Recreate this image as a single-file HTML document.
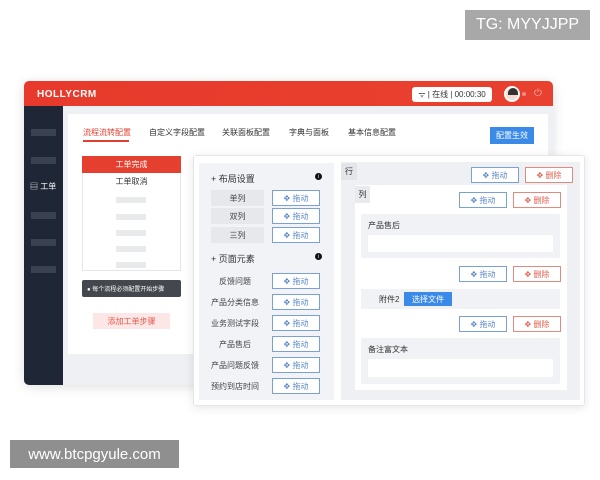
<!DOCTYPE html>
<html><head><meta charset="utf-8"><style>
*{margin:0;padding:0;box-sizing:border-box}
body{width:600px;height:480px;background:#fff;position:relative;overflow:hidden;font-family:"Liberation Sans","Noto Sans CJK SC",sans-serif;color:#333;font-size:8px}
.a{position:absolute}
.c{display:flex;align-items:center;justify-content:center}
.db{position:absolute;border:1px solid #7aa0d6;color:#5b88c8;background:#fff;font-size:8px;display:flex;align-items:center;justify-content:center;width:48px;height:16px}
.dl{position:absolute;border:1px solid #e08a80;color:#e06050;background:#fff;font-size:8px;display:flex;align-items:center;justify-content:center;width:48px;height:16px}
.lab{position:absolute;background:#e6e8ec;width:53px;height:16px;display:flex;align-items:center;justify-content:center;font-size:8px;color:#444}
.el{position:absolute;left:200px;width:70px;text-align:center;font-size:8px;color:#444}
.sk{position:absolute;left:116px;width:30px;height:6px;background:#e9eaec}
.sb{position:absolute;left:31px;width:25px;height:7px;background:#3a4252}
</style></head><body>
<div class="a c" style="left:465px;top:10px;width:125px;height:30px;background:#a8a8a8;color:#fff;font-size:16px">TG: MYYJJPP</div>

<div class="a" style="left:24px;top:81px;width:529px;height:304px;border-radius:5px;overflow:hidden;background:#eef0f3;box-shadow:0 2px 12px rgba(0,0,0,.12)">
 <div class="a" style="left:0;top:0;width:529px;height:25px;background:linear-gradient(90deg,#e73a2c,#e8412f)"></div>
 <div class="a" style="left:13px;top:8px;color:#fff;font-weight:bold;font-size:10px;letter-spacing:.5px">HOLLYCRM</div>
 <div class="a c" style="left:388px;top:6px;width:80px;height:15px;background:#fff;border-radius:3px;font-size:8px;color:#333">ᯤ | 在线 | 00:00:30</div>
 <div class="a" style="left:480px;top:5px;width:16px;height:16px;border-radius:50%;background:#f3ddd2;border:2px solid #fff"><div style="position:absolute;left:2px;top:0;width:10px;height:7px;border-radius:5px 5px 0 0;background:#333"></div></div>
 <div class="a" style="left:498px;top:11px;width:4px;height:4px;border-radius:50%;background:#f08a80"></div>
 <div class="a" style="left:510px;top:7px;color:#f9b0a8;font-size:10px">⏻</div>
 <div class="a" style="left:0;top:25px;width:39px;height:279px;background:#1f2636"></div>
 <div class="sb" style="left:7px;top:48px"></div>
 <div class="sb" style="left:7px;top:76px"></div>
 <div class="a" style="left:6px;top:100px;color:#fff;font-size:8px">▤ 工单</div>
 <div class="sb" style="left:7px;top:131px"></div>
 <div class="sb" style="left:7px;top:158px"></div>
 <div class="sb" style="left:7px;top:185px"></div>
 <div class="a" style="left:44px;top:33px;width:480px;height:240px;background:#fff"></div>
</div>

<div class="a" style="left:83px;top:127px;color:#e0402f;font-size:8px">流程流转配置</div>
<div class="a" style="left:83px;top:140px;width:46px;height:2px;background:#e0402f"></div>
<div class="a" style="left:149px;top:127px;font-size:8px">自定义字段配置</div>
<div class="a" style="left:222px;top:127px;font-size:8px">关联面板配置</div>
<div class="a" style="left:289px;top:127px;font-size:8px">字典与面板</div>
<div class="a" style="left:348px;top:127px;font-size:8px">基本信息配置</div>
<div class="a c" style="left:490px;top:127px;width:44px;height:17px;background:#3b8ae8;color:#fff;font-size:8px">配置生效</div>

<div class="a" style="left:82px;top:156px;width:99px;height:115px;border:1px solid #e6e6e6;background:#fff"></div>
<div class="a c" style="left:82px;top:156px;width:99px;height:17px;background:#e5402f;color:#fff;font-size:8px">工单完成</div>
<div class="a c" style="left:82px;top:173px;width:99px;height:17px;font-size:8px">工单取消</div>
<div class="sk" style="top:197px"></div><div class="sk" style="top:214px"></div><div class="sk" style="top:230px"></div><div class="sk" style="top:246px"></div><div class="sk" style="top:262px"></div>
<div class="a" style="left:82px;top:280px;width:99px;height:17px;background:#44474d;border-radius:2px;color:#fff;font-size:6px;padding:4px 0 0 5px">● 每个流程必须配置开始步骤</div>
<div class="a c" style="left:93px;top:313px;width:77px;height:16px;background:#fde7e6;color:#e25a4c;font-size:8px">添加工单步骤</div>

<div class="a" style="left:193px;top:155px;width:392px;height:251px;background:#fff;border:1px solid #e4e6ea;border-radius:3px;box-shadow:0 2px 10px rgba(0,0,0,.1)"></div>
<div class="a" style="left:199px;top:163px;width:135px;height:237px;background:#f1f3f7"></div>
<div class="a" style="left:211px;top:172px;font-size:9px">+ 布局设置</div>
<div class="a c" style="left:315px;top:173px;width:7px;height:7px;border-radius:50%;background:#111;color:#fff;font-size:5px">i</div>
<div class="lab" style="left:211px;top:190px">单列</div><div class="db" style="left:272px;top:190px">✥ 拖动</div>
<div class="lab" style="left:211px;top:208px">双列</div><div class="db" style="left:272px;top:208px">✥ 拖动</div>
<div class="lab" style="left:211px;top:227px">三列</div><div class="db" style="left:272px;top:227px">✥ 拖动</div>
<div class="a" style="left:211px;top:252px;font-size:9px">+ 页面元素</div>
<div class="a c" style="left:315px;top:253px;width:7px;height:7px;border-radius:50%;background:#111;color:#fff;font-size:5px">i</div>
<div class="el" style="top:276px">反馈问题</div><div class="db" style="left:272px;top:273px">✥ 拖动</div>
<div class="el" style="top:297px">产品分类信息</div><div class="db" style="left:272px;top:294px">✥ 拖动</div>
<div class="el" style="top:318px">业务测试字段</div><div class="db" style="left:272px;top:315px">✥ 拖动</div>
<div class="el" style="top:339px">产品售后</div><div class="db" style="left:272px;top:336px">✥ 拖动</div>
<div class="el" style="top:360px">产品问题反馈</div><div class="db" style="left:272px;top:357px">✥ 拖动</div>
<div class="el" style="top:381px">预约到店时间</div><div class="db" style="left:272px;top:378px">✥ 拖动</div>

<div class="a" style="left:341px;top:162px;width:239px;height:238px;background:#eef0f4"></div>
<div class="a c" style="left:341px;top:163px;width:16px;height:17px;background:#e3e5e9;font-size:8px">行</div>
<div class="db" style="left:471px;top:167px">✥ 拖动</div><div class="dl" style="left:525px;top:167px">✥ 删除</div>
<div class="a" style="left:355px;top:185px;width:212px;height:205px;background:#fff"></div>
<div class="a c" style="left:355px;top:186px;width:15px;height:17px;background:#e8eaee;font-size:8px">列</div>
<div class="db" style="left:459px;top:192px">✥ 拖动</div><div class="dl" style="left:513px;top:192px">✥ 删除</div>
<div class="a" style="left:361px;top:214px;width:199px;height:44px;background:#f1f2f5"></div>
<div class="a" style="left:368px;top:220px;font-size:8px">产品售后</div>
<div class="a" style="left:368px;top:235px;width:185px;height:17px;background:#fff"></div>
<div class="db" style="left:459px;top:266px">✥ 拖动</div><div class="dl" style="left:513px;top:266px">✥ 删除</div>
<div class="a" style="left:361px;top:289px;width:199px;height:20px;background:#f1f2f5"></div>
<div class="a" style="left:379px;top:294px;font-size:8px">附件2</div>
<div class="a c" style="left:404px;top:292px;width:48px;height:14px;background:#3b8ae8;color:#fff;font-size:8px">选择文件</div>
<div class="db" style="left:459px;top:316px">✥ 拖动</div><div class="dl" style="left:513px;top:316px">✥ 删除</div>
<div class="a" style="left:361px;top:338px;width:199px;height:46px;background:#f1f2f5"></div>
<div class="a" style="left:368px;top:344px;font-size:8px">备注富文本</div>
<div class="a" style="left:368px;top:359px;width:185px;height:18px;background:#fff"></div>

<div class="a c" style="left:10px;top:440px;width:169px;height:28px;background:#8f8f8f;color:#fff;font-size:15px">www.btcpgyule.com</div>
</body></html>
